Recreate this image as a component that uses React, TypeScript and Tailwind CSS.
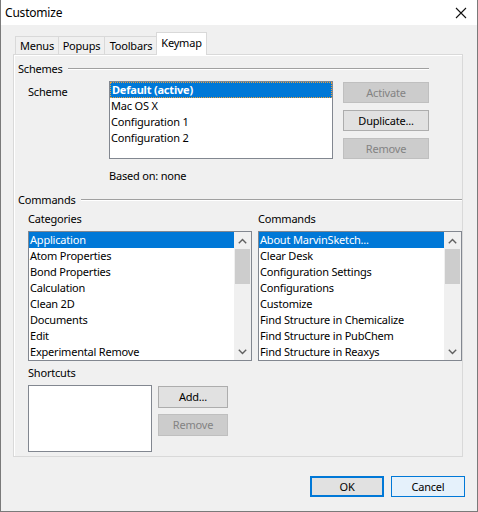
import React from 'react'

const CATEGORIES = [
  'Application',
  'Atom Properties',
  'Bond Properties',
  'Calculation',
  'Clean 2D',
  'Documents',
  'Edit',
  'Experimental Remove',
]

const COMMANDS = [
  'About MarvinSketch...',
  'Clear Desk',
  'Configuration Settings',
  'Configurations',
  'Customize',
  'Find Structure in Chemicalize',
  'Find Structure in PubChem',
  'Find Structure in Reaxys',
]

const SCHEMES = ['Default (active)', 'Mac OS X', 'Configuration 1', 'Configuration 2']

const TABS = [
  { label: 'Menus', w: 'w-[43px]' },
  { label: 'Popups', w: 'w-[46px]' },
  { label: 'Toolbars', w: 'w-[53px]' },
]

function Btn({ label, disabled, w, h = 'h-[21px]' }: { label: string; disabled?: boolean; w: string; h?: string }) {
  return (
    <div
      className={[
        'flex items-center justify-center border',
        w,
        h,
        disabled ? 'bg-[#cccccc] border-[#bfbfbf] text-[#838383]' : 'bg-[#e1e1e1] border-[#adadad] text-black',
      ].join(' ')}
    >
      {label}
    </div>
  )
}

function Chevron({ up }: { up?: boolean }) {
  return (
    <svg width="9" height="6" viewBox="0 0 9 6">
      <path
        d={up ? 'M0.8 5.2 L4.5 1.5 L8.2 5.2' : 'M0.8 0.8 L4.5 4.5 L8.2 0.8'}
        fill="none"
        stroke="#606060"
        strokeWidth="1.4"
      />
    </svg>
  )
}

function ScrollList({ items, width }: { items: string[]; width: string }) {
  return (
    <div className={`flex h-[130px] border border-[#828790] bg-white ${width}`}>
      <div className="flex-1 min-w-0">
        {items.map((t, i) => (
          <div
            key={t}
            className={`h-[16px] leading-[16px] pl-[1px] whitespace-nowrap ${i === 0 ? 'bg-[#0078d7] text-white' : 'text-black'}`}
          >
            {t}
          </div>
        ))}
      </div>
      <div className="w-[17px] flex flex-col bg-[#f0f0f0]">
        <div className="h-[17px] flex items-center justify-center">
          <Chevron up />
        </div>
        <div className="h-[35px] mx-[1px] bg-[#cdcdcd]" />
        <div className="flex-1" />
        <div className="h-[17px] flex items-center justify-center">
          <Chevron />
        </div>
      </div>
    </div>
  )
}

function Header({ label, width }: { label: string; width: string }) {
  return (
    <div className={`flex items-center h-[16px] ${width}`}>
      <span>{label}</span>
      <div className="ml-[5px] flex-1 h-[2px] border-t border-[#a0a0a0] border-b border-b-white" />
    </div>
  )
}

export default function App() {
  return (
    <div
      className="w-[478px] h-[512px] bg-[#f0f0f0] border-x border-b border-[#7a7a7a] flex flex-col text-[11px] leading-[16px] tracking-[-0.2px] text-black"
      style={{ fontFamily: '"Noto Sans", "Liberation Sans", sans-serif' }}
    >
      {/* title bar */}
      <div className="h-[25px] bg-white flex items-center justify-between pl-[4px] pr-[10px] shrink-0">
        <span className="text-[12px]">Customize</span>
        <svg width="12" height="12" viewBox="0 0 12 12">
          <path d="M1 1 L11 11 M11 1 L1 11" stroke="#111" strokeWidth="1.1" />
        </svg>
      </div>

      {/* tabs */}
      <div className="flex items-end h-[29px] pl-[14px] shrink-0">
        <div className="flex items-end relative z-10 -mb-[1px]">
          {TABS.map(t => (
            <div
              key={t.label}
              className={`h-[19px] flex items-center justify-center border border-r-0 border-[#d9d9d9] bg-[#f0f0f0] ${t.w}`}
            >
              {t.label}
            </div>
          ))}
          <div className="h-[23px] w-[51px] -ml-[1px] flex items-center justify-center border border-b-0 border-[#d9d9d9] bg-white pb-[2px]">
            Keymap
          </div>
        </div>
      </div>

      {/* panel */}
      <div className="ml-[12px] w-[450px] h-[403px] border border-[#d9d9d9] shadow-[inset_1px_1px_0_#ffffff] pl-[4px] pt-[6px] flex flex-col shrink-0">
        <Header label="Schemes" width="w-[411px]" />

        <div className="flex mt-[4px] pl-[10px]">
          <div className="w-[81px] pt-[3px]">Scheme</div>
          <div className="w-[224px] h-[78px] border border-[#828790] bg-white">
            {SCHEMES.map((s, i) => (
              <div
                key={s}
                className={
                  i === 0
                    ? 'h-[16px] leading-[14px] pl-[1px] bg-[#0078d7] text-white font-bold border border-dotted border-[#e8a040]'
                    : 'h-[16px] leading-[16px] pl-[1px]'
                }
              >
                {s}
              </div>
            ))}
          </div>
          <div className="ml-[10px] pt-[1px] flex flex-col gap-[7px]">
            <Btn label="Activate" disabled w="w-[86px]" />
            <Btn label="Duplicate..." w="w-[86px]" />
            <Btn label="Remove" disabled w="w-[86px]" />
          </div>
        </div>

        <div className="mt-[9px] pl-[91px]">Based on: none</div>

        <div className="mt-[8px]">
          <Header label="Commands" width="w-full" />
        </div>

        <div className="flex mt-[3px] pl-[10px] gap-[6px]">
          <div className="flex flex-col gap-[4px]">
            <div>Categories</div>
            <ScrollList items={CATEGORIES} width="w-[224px]" />
          </div>
          <div className="flex flex-col gap-[4px]">
            <div>Commands</div>
            <ScrollList items={COMMANDS} width="w-[204px]" />
          </div>
        </div>

        <div className="mt-[4px] pl-[10px]">Shortcuts</div>
        <div className="flex mt-[4px] pl-[10px]">
          <div className="w-[124px] h-[67px] border border-[#828790] bg-white" />
          <div className="ml-[6px] pt-[1px] flex flex-col gap-[6px]">
            <Btn label="Add..." w="w-[70px]" h="h-[22px]" />
            <Btn label="Remove" disabled w="w-[70px]" h="h-[22px]" />
          </div>
        </div>
      </div>

      {/* bottom buttons */}
      <div className="flex justify-end gap-[7px] pr-[12px] mt-[19px]">
        <div className="w-[74px] h-[21px] flex items-center justify-center border-2 border-[#0078d7] bg-[#e1e1e1]">OK</div>
        <div className="w-[74px] h-[21px] flex items-center justify-center border border-[#0078d7] bg-[#e5f1fb]">Cancel</div>
      </div>
    </div>
  )
}
